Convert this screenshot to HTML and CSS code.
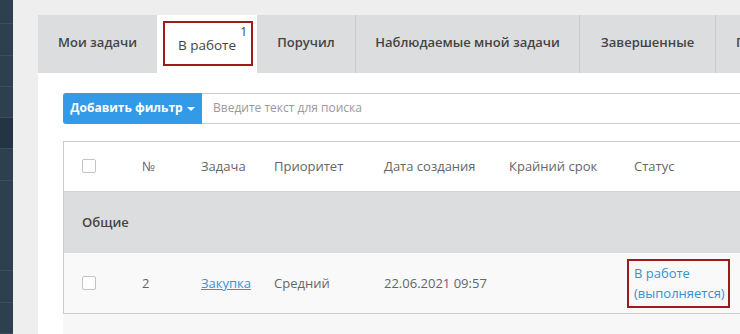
FILE: index.html
```html
<!DOCTYPE html>
<html lang="ru">
<head>
<meta charset="utf-8">
<link rel="stylesheet" href="styles.css">
</head>
<body>
<div class="layout">
  <nav class="sidebar">
    <div class="nav-item h24"></div>
    <div class="nav-item"></div>
    <div class="nav-item"></div>
    <div class="nav-item"></div>
    <div class="nav-item active"></div>
    <div class="nav-item"></div>
    <div class="nav-item tall"></div>
    <div class="nav-item"></div>
    <div class="nav-item"></div>
  </nav>
  <main class="content">
    <section class="panel">
      <div class="tabs">
        <div class="tab w1">Мои задачи</div>
        <div class="tab active w2"><span class="tab-mark">В работе<sup class="badge">1</sup></span></div>
        <div class="tab w3">Поручил</div>
        <div class="tab w4">Наблюдаемые мной задачи</div>
        <div class="tab w5">Завершенные</div>
        <div class="tab w6">Просроченные</div>
      </div>
      <div class="panel-body">
        <div class="filter">
          <button class="filter-btn">Добавить фильтр <span class="caret"></span></button>
          <input class="search" type="text" placeholder="Введите текст для поиска">
        </div>
        <div class="table">
          <div class="row head">
            <div class="c c-check"><span class="checkbox"></span></div>
            <div class="c c-num">№</div>
            <div class="c c-task">Задача</div>
            <div class="c c-prio">Приоритет</div>
            <div class="c c-date">Дата создания</div>
            <div class="c c-due">Крайний срок</div>
            <div class="c c-status">Статус</div>
          </div>
          <div class="row group">
            <div class="c c-group">Общие</div>
          </div>
          <div class="row data">
            <div class="c c-check"><span class="checkbox"></span></div>
            <div class="c c-num">2</div>
            <div class="c c-task"><a class="link" href="#">Закупка</a></div>
            <div class="c c-prio">Средний</div>
            <div class="c c-date">22.06.2021 09:57</div>
            <div class="c c-due"></div>
            <div class="c c-status"><span class="status-mark"><a class="status" href="#">В работе<br>(выполняется)</a></span></div>
          </div>
        </div>
        <div class="footer-area"></div>
      </div>
    </section>
  </main>
</div>
</body>
</html>
```

FILE: styles.css
```css
* { box-sizing: border-box; }
html, body { margin: 0; padding: 0; }
body {
  width: 740px;
  height: 334px;
  overflow: hidden;
  font-family: "Open Sans", "Liberation Sans", sans-serif;
  background: #eeeeee;
}
.layout { display: flex; height: 334px; }
.sidebar {
  width: 13px;
  flex: none;
  background: #2e3f50;
  display: flex;
  flex-direction: column;
}
.nav-item { height: 32px; border-bottom: 1px solid #3b4c5e; }
.nav-item.h24 { height: 25px; }
.nav-item.active { background: #243445; }
.nav-item.tall { height: 93px; }
.content {
  flex: 1;
  min-width: 0;
  padding: 15px 0 0 25px;
  overflow: hidden;
}
.panel {
  background: #ffffff;
  width: 900px;
  height: 400px;
}
.tabs {
  display: flex;
  height: 58px;
  background: #dcdddf;
}
.tab {
  flex: none;
  display: flex;
  align-items: center;
  justify-content: center;
  font-size: 13px;
  font-weight: 600;
  color: #444;
  border-right: 1px solid #cacbcd;
  padding-bottom: 4px;
}
.tab.w1 { width: 119px; border-right: none; }
.tab.w2 { width: 100px; }
.tab.w3 { width: 99px; }
.tab.w4 { width: 224px; }
.tab.w5 { width: 136px; }
.tab.w6 { width: 170px; justify-content: flex-start; padding-left: 20px; }
.tab.active {
  background: #ffffff;
  border-right: none;
  padding: 6px 4px 7px 6px;
  align-items: stretch;
}
.tab-mark {
  flex: 1;
  border: 2px solid #9e1b1b;
  display: flex;
  align-items: center;
  justify-content: center;
  padding-top: 3px;
  padding-right: 2px;
  position: relative;
  font-weight: 500;
  font-size: 13.5px;
}
.badge {
  position: absolute;
  top: 0px;
  right: 4px;
  font-size: 12px;
  font-weight: 500;
  color: #444;
}
.panel-body { padding: 20px 0 0 25px; }
.filter { display: flex; height: 31px; }
.filter-btn {
  flex: none;
  width: 139px;
  height: 31px;
  background: #329ae6;
  color: #fff;
  border: none;
  border-radius: 3px 0 0 3px;
  font-family: "Open Sans", "Liberation Sans", sans-serif;
  font-size: 12px;
  font-weight: 700;
  padding: 0 0 2px 0;
  display: flex;
  align-items: center;
  justify-content: center;
  gap: 4px;
}
.caret {
  width: 0; height: 0;
  border-left: 4px solid transparent;
  border-right: 4px solid transparent;
  border-top: 4px solid #fff;
  margin-top: 2px;
}
.search {
  flex: 1;
  height: 31px;
  border: 1px solid #cccccc;
  border-left: none;
  padding: 0 0 2px 11px;
  font-family: "Open Sans", "Liberation Sans", sans-serif;
  font-size: 12px;
  color: #555;
  outline: none;
}
.search::placeholder { color: #999; }
.table {
  margin-top: 17px;
  border: 1px solid #cccccc;
  border-right: none;
}
.row { display: flex; align-items: center; }
.row.head { height: 50px; background: #fff; border-bottom: 1px solid #d3d3d3; }
.row.group { height: 61px; background: #dcdddf; }
.row.data { height: 60px; background: #f9f9f9; }
.c { font-size: 13px; color: #666; flex: none; padding-bottom: 1px; }
.c-check { width: 78px; padding-left: 18px; display: flex; }
.c-num { width: 59px; }
.c-task { width: 73px; }
.c-prio { width: 110px; }
.c-date { width: 125px; }
.c-due { width: 125px; }
.c-status { width: 120px; }
.row.data .c-status { padding-bottom: 0; margin-left: -7px; }
.checkbox {
  width: 14px; height: 14px;
  border: 1px solid #c4c4c4;
  border-radius: 2px;
  background: #fff;
}
.c-group { padding-left: 18px; font-weight: 600; color: #444; }
.link { color: #3a91d3; text-decoration: underline; }
.status-mark {
  display: inline-block;
  border: 2px solid #9e1b1b;
  padding: 2px 3px 3px 5px;
  width: 103px;
}
.status { color: #3a8fcf; text-decoration: none; line-height: 20px; font-size: 13px; }
.footer-area { height: 40px; background: #f7f7f7; }
```
